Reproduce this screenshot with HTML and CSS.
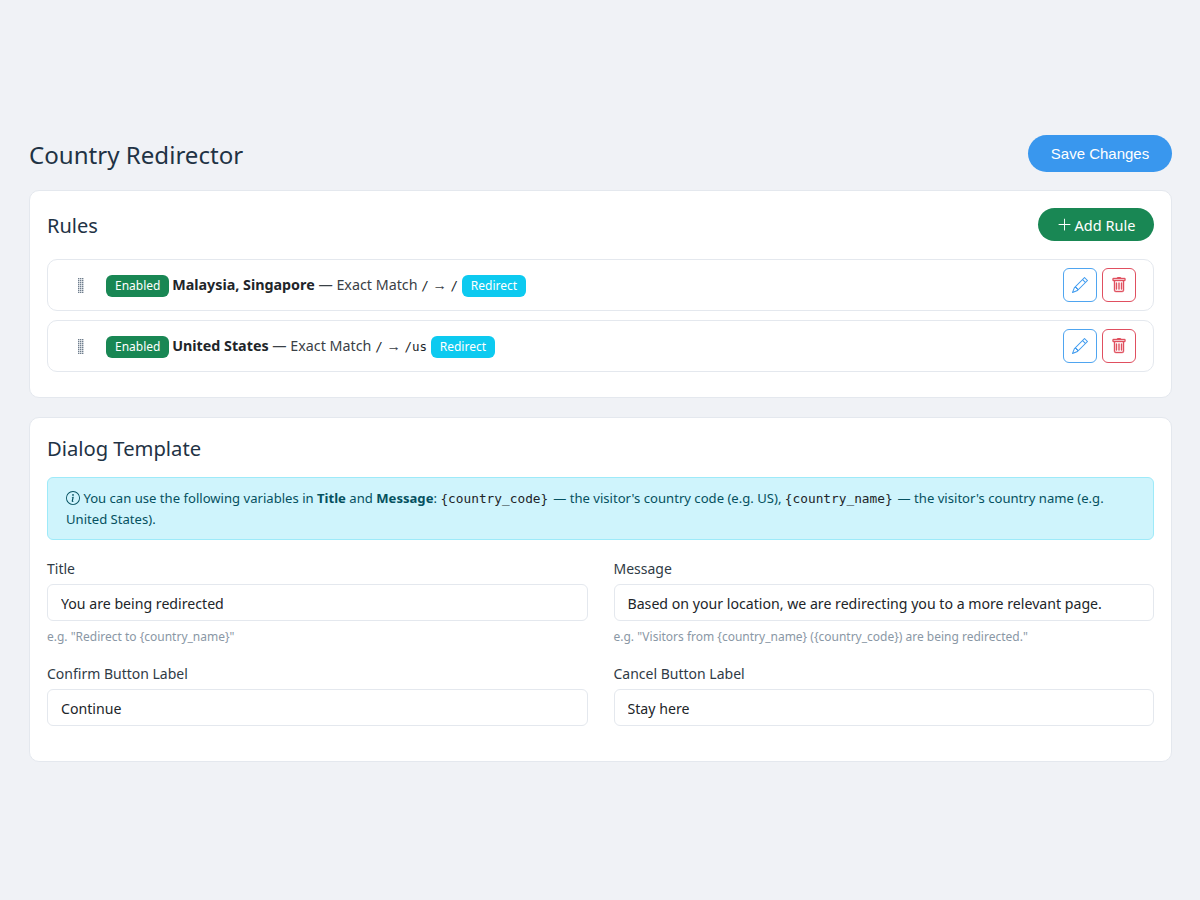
FILE: index.html
```html
<!DOCTYPE html>
<html lang="en">
<head>
    <meta charset="UTF-8">
    <meta name="viewport" content="width=device-width, initial-scale=1.0">
    <title>Country Redirector</title>
    <link rel="stylesheet" href="styles.css">
</head>
<body>
    <div class="page">
        <div class="page-header">
            <h1 class="page-title">Country Redirector</h1>
            <button type="button" class="btn-save">Save Changes</button>
        </div>

        <section class="card rules-card">
            <div class="card-header">
                <h2 class="card-title">Rules</h2>
                <button type="button" class="btn-add">
                    <svg class="icon-plus" viewBox="0 0 16 16" fill="currentColor"><path d="M8 1.5a.5.5 0 0 1 .5.5v5.5H14a.5.5 0 0 1 0 1H8.500V14a.5.5 0 0 1-1 0V8.500H2a.5.5 0 0 1 0-1h5.500V2a.5.5 0 0 1 .5-.5z"/></svg>
                    Add Rule
                </button>
            </div>

            <div class="rule">
                <span class="drag-handle"></span>
                <div class="rule-text">
                    <span class="badge badge-green">Enabled</span>
                    <strong>Malaysia, Singapore</strong> — Exact Match <code>/</code> → <code>/</code>
                    <span class="badge badge-cyan">Redirect</span>
                </div>
                <div class="rule-actions">
                    <button type="button" class="icon-btn icon-btn-blue" aria-label="Edit">
                        <svg viewBox="0 0 16 16" fill="currentColor"><path d="M12.146.146a.5.5 0 0 1 .708 0l3 3a.5.5 0 0 1 0 .708l-10 10a.5.5 0 0 1-.168.11l-5 2a.5.5 0 0 1-.65-.65l2-5a.5.5 0 0 1 .11-.168l10-10zM11.207 2.500 13.500 4.793 14.793 3.500 12.500 1.207 11.207 2.500zm1.586 3L10.500 3.207 4 9.707V10h.5a.5.5 0 0 1 .5.5v.5h.5a.5.5 0 0 1 .5.5v.5h.293l6.500-6.500zm-9.761 5.175-.106.106-1.528 3.821 3.821-1.528.106-.106A.5.5 0 0 1 5 12.500V12h-.5a.5.5 0 0 1-.5-.5V11h-.5a.5.5 0 0 1-.468-.325z"/></svg>
                    </button>
                    <button type="button" class="icon-btn icon-btn-red" aria-label="Delete">
                        <svg viewBox="0 0 16 16" fill="currentColor"><path d="M5.500 5.500A.5.5 0 0 1 6 6v6a.5.5 0 0 1-1 0V6a.5.5 0 0 1 .5-.5zm2.500 0a.5.5 0 0 1 .5.5v6a.5.5 0 0 1-1 0V6a.5.5 0 0 1 .5-.5zm3 .5a.5.5 0 0 0-1 0v6a.5.5 0 0 0 1 0V6z"/><path fill-rule="evenodd" d="M14.500 3a1 1 0 0 1-1 1H13v9a2 2 0 0 1-2 2H5a2 2 0 0 1-2-2V4h-.5a1 1 0 0 1-1-1V2a1 1 0 0 1 1-1H6a1 1 0 0 1 1-1h2a1 1 0 0 1 1 1h3.500a1 1 0 0 1 1 1v1zM4.118 4 4 4.059V13a1 1 0 0 0 1 1h6a1 1 0 0 0 1-1V4.059L11.882 4H4.118zM2.500 3V2h11v1h-11z"/></svg>
                    </button>
                </div>
            </div>

            <div class="rule">
                <span class="drag-handle"></span>
                <div class="rule-text">
                    <span class="badge badge-green">Enabled</span>
                    <strong>United States</strong> — Exact Match <code>/</code> → <code>/us</code>
                    <span class="badge badge-cyan">Redirect</span>
                </div>
                <div class="rule-actions">
                    <button type="button" class="icon-btn icon-btn-blue" aria-label="Edit">
                        <svg viewBox="0 0 16 16" fill="currentColor"><path d="M12.146.146a.5.5 0 0 1 .708 0l3 3a.5.5 0 0 1 0 .708l-10 10a.5.5 0 0 1-.168.11l-5 2a.5.5 0 0 1-.65-.65l2-5a.5.5 0 0 1 .11-.168l10-10zM11.207 2.500 13.500 4.793 14.793 3.500 12.500 1.207 11.207 2.500zm1.586 3L10.500 3.207 4 9.707V10h.5a.5.5 0 0 1 .5.5v.5h.5a.5.5 0 0 1 .5.5v.5h.293l6.500-6.500zm-9.761 5.175-.106.106-1.528 3.821 3.821-1.528.106-.106A.5.5 0 0 1 5 12.500V12h-.5a.5.5 0 0 1-.5-.5V11h-.5a.5.5 0 0 1-.468-.325z"/></svg>
                    </button>
                    <button type="button" class="icon-btn icon-btn-red" aria-label="Delete">
                        <svg viewBox="0 0 16 16" fill="currentColor"><path d="M5.500 5.500A.5.5 0 0 1 6 6v6a.5.5 0 0 1-1 0V6a.5.5 0 0 1 .5-.5zm2.500 0a.5.5 0 0 1 .5.5v6a.5.5 0 0 1-1 0V6a.5.5 0 0 1 .5-.5zm3 .5a.5.5 0 0 0-1 0v6a.5.5 0 0 0 1 0V6z"/><path fill-rule="evenodd" d="M14.500 3a1 1 0 0 1-1 1H13v9a2 2 0 0 1-2 2H5a2 2 0 0 1-2-2V4h-.5a1 1 0 0 1-1-1V2a1 1 0 0 1 1-1H6a1 1 0 0 1 1-1h2a1 1 0 0 1 1 1h3.500a1 1 0 0 1 1 1v1zM4.118 4 4 4.059V13a1 1 0 0 0 1 1h6a1 1 0 0 0 1-1V4.059L11.882 4H4.118zM2.500 3V2h11v1h-11z"/></svg>
                    </button>
                </div>
            </div>
        </section>

        <section class="card template-card">
            <h2 class="card-title template-title">Dialog Template</h2>

            <div class="alert">
                <svg class="icon-info" viewBox="0 0 16 16" fill="currentColor"><path d="M8 15A7 7 0 1 1 8 1a7 7 0 0 1 0 14zm0 1A8 8 0 1 0 8 0a8 8 0 0 0 0 16z"/><path d="m8.930 6.588-2.290.287-.082.38.450.083c.294.070.352.176.288.469l-.738 3.468c-.194.897.105 1.319.808 1.319.545 0 1.178-.252 1.465-.598l.088-.416c-.2.176-.492.246-.686.246-.275 0-.375-.193-.304-.533L8.930 6.588zM9 4.500a1 1 0 1 1-2 0 1 1 0 0 1 2 0z"/></svg>
                You can use the following variables in <strong>Title</strong> and <strong>Message</strong>: <code>{country_code}</code> — the visitor's country code (e.g. US), <code>{country_name}</code> — the visitor's country name (e.g. United States).
            </div>

            <div class="form-grid">
                <div class="form-group">
                    <label>Title</label>
                    <input type="text" value="You are being redirected">
                    <div class="hint">e.g. "Redirect to {country_name}"</div>
                </div>
                <div class="form-group">
                    <label>Message</label>
                    <input type="text" value="Based on your location, we are redirecting you to a more relevant page.">
                    <div class="hint">e.g. "Visitors from {country_name} ({country_code}) are being redirected."</div>
                </div>
                <div class="form-group">
                    <label>Confirm Button Label</label>
                    <input type="text" value="Continue">
                </div>
                <div class="form-group">
                    <label>Cancel Button Label</label>
                    <input type="text" value="Stay here">
                </div>
            </div>
        </section>
    </div>
</body>
</html>
```

FILE: styles.css
```css
* {
    box-sizing: border-box;
}

body {
    font-family: "Noto Sans", "Open Sans", sans-serif;
    font-size: 14px;
    background: #f0f2f6;
    color: #212529;
    margin: 0;
}

.page {
    padding: 135px 28px 0 29px;
}

.page-header {
    display: flex;
    justify-content: space-between;
    align-items: center;
    height: 37px;
    margin-bottom: 18px;
}

.page-title {
    margin: 0;
    padding-top: 2px;
    font-size: 24.1px;
    font-weight: 400;
    color: #1f3345;
}

.btn-save {
    width: 144px;
    height: 37px;
    border: none;
    border-radius: 19px;
    background: #3997ee;
    color: #fff;
    font-family: "Liberation Sans", Arial, sans-serif;
    font-size: 15px;
}

.card {
    background: #fff;
    border: 1px solid #e4e8ee;
    border-radius: 10px;
    padding: 17px;
}

.rules-card {
    height: 208px;
    margin-bottom: 19px;
}

.template-card {
    height: 345px;
}

.card-header {
    display: flex;
    justify-content: space-between;
    align-items: center;
    height: 33px;
    margin-bottom: 18px;
}

.card-title {
    margin: 0;
    padding-top: 2px;
    font-size: 20px;
    font-weight: 400;
    color: #1f3345;
}

.template-title {
    line-height: 27px;
    margin-bottom: 15px;
    padding-top: 0;
    font-size: 20.2px;
}

.btn-add {
    display: flex;
    align-items: center;
    justify-content: center;
    gap: 3px;
    width: 116px;
    height: 33px;
    padding: 0;
    border: none;
    border-radius: 17px;
    background: #198754;
    color: #fff;
    font-family: inherit;
    font-size: 14.5px;
}

.icon-plus {
    width: 15px;
    height: 15px;
}

.rule {
    display: flex;
    align-items: center;
    height: 52px;
    margin-bottom: 9px;
    padding: 0 17px 0 30px;
    border: 1px solid #e4e8ee;
    border-radius: 10px;
}

.drag-handle {
    width: 6px;
    height: 15px;
    margin-right: 22px;
    background:
        repeating-linear-gradient(90deg, transparent 0 1px, rgba(255, 255, 255, 0.6) 1px 2px),
        repeating-linear-gradient(0deg, #6f7d8c 0 1px, #c9d0d8 1px 2px);
}

.rule-text {
    flex: 1;
    padding-top: 1px;
    white-space: nowrap;
    font-size: 14.3px;
    color: #3a4046;
}

.rule-text strong {
    color: #212529;
}

.badge {
    display: inline-block;
    padding: 0 9px;
    line-height: 22px;
    border-radius: 6px;
    font-size: 12px;
    color: #fff;
}

.badge-green {
    margin-right: -1px;
    background: #198754;
}

.badge-cyan {
    background: #0dcaf0;
}

code {
    font-family: "DejaVu Sans Mono", "Liberation Mono", monospace;
    font-size: 12.5px;
    color: #212529;
}

.rule-actions {
    display: flex;
    gap: 5px;
}

.icon-btn {
    display: flex;
    align-items: center;
    justify-content: center;
    width: 34px;
    height: 34px;
    padding: 0;
    background: #fff;
    border: 1px solid;
    border-radius: 6px;
}

.icon-btn svg {
    width: 16px;
    height: 16px;
}

.icon-btn-blue {
    color: #3f9bef;
    border-color: #4fa5f0;
}

.icon-btn-red {
    color: #e0505f;
    border-color: #e04f60;
}

.icon-btn-red svg {
    stroke: currentColor;
    stroke-width: 0.4;
}

.alert {
    height: 63px;
    margin-bottom: 20px;
    padding: 10px 18px;
    background: #cff4fc;
    border: 1px solid #9eeaf9;
    border-radius: 6px;
    color: #055160;
    font-size: 13.1px;
    line-height: 21px;
}

.alert code {
    margin-right: 1.5px;
    font-size: 12.8px;
    color: #212529;
}

.icon-info {
    width: 14px;
    height: 14px;
    vertical-align: -2px;
}

.form-grid {
    display: grid;
    grid-template-columns: 1fr 1fr;
    column-gap: 26px;
}

.form-group label {
    display: block;
    margin-bottom: 6px;
    line-height: 18px;
    color: #2f3b46;
}

.form-group input {
    display: block;
    width: 100%;
    height: 37px;
    padding: 2px 13px 0;
    border: 1px solid #e4e8ee;
    border-radius: 6px;
    background: #fff;
    color: #212529;
    font-family: inherit;
    font-size: 14.15px;
}

.hint {
    margin-top: 7px;
    margin-bottom: 19px;
    line-height: 18px;
    font-size: 12px;
    color: #8a97a5;
}
```
